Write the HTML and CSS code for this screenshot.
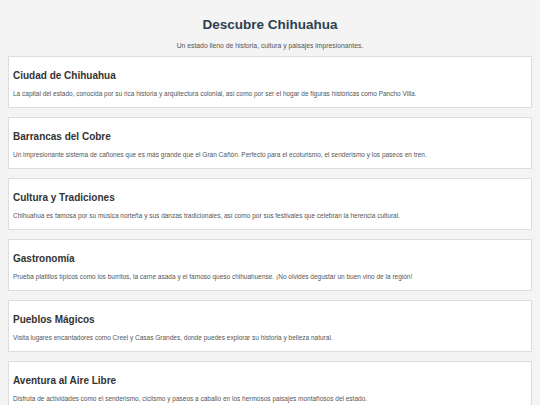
FILE: index.html
```html
<!DOCTYPE html>
<html lang="es">
<head>
<meta charset="utf-8">
<title>Descubre Chihuahua</title>
<link rel="stylesheet" href="styles.css">
</head>
<body>
<header class="hero">
  <h1 class="hero-title">Descubre Chihuahua</h1>
  <p class="hero-sub">Un estado lleno de historia, cultura y paisajes impresionantes.</p>
</header>
<main class="list">
  <section class="card">
    <h2 class="card-title">Ciudad de Chihuahua</h2>
    <p class="card-text">La capital del estado, conocida por su rica historia y arquitectura colonial, así como por ser el hogar de figuras históricas como Pancho Villa.</p>
  </section>
  <section class="card">
    <h2 class="card-title">Barrancas del Cobre</h2>
    <p class="card-text">Un impresionante sistema de cañones que es más grande que el Gran Cañón. Perfecto para el ecoturismo, el senderismo y los paseos en tren.</p>
  </section>
  <section class="card">
    <h2 class="card-title">Cultura y Tradiciones</h2>
    <p class="card-text">Chihuahua es famosa por su música norteña y sus danzas tradicionales, así como por sus festivales que celebran la herencia cultural.</p>
  </section>
  <section class="card">
    <h2 class="card-title">Gastronomía</h2>
    <p class="card-text">Prueba platillos típicos como los burritos, la carne asada y el famoso queso chihuahuense. ¡No olvides degustar un buen vino de la región!</p>
  </section>
  <section class="card">
    <h2 class="card-title">Pueblos Mágicos</h2>
    <p class="card-text">Visita lugares encantadores como Creel y Casas Grandes, donde puedes explorar su historia y belleza natural.</p>
  </section>
  <section class="card">
    <h2 class="card-title">Aventura al Aire Libre</h2>
    <p class="card-text">Disfruta de actividades como el senderismo, ciclismo y paseos a caballo en los hermosos paisajes montañosos del estado.</p>
  </section>
</main>
</body>
</html>
```
FILE: styles.css
```css
* { box-sizing: border-box; }
html, body {
  margin: 0;
  padding: 0;
  background: #f4f4f4;
  font-family: "Liberation Sans", Arial, sans-serif;
  color: #333;
}
.hero {
  padding-top: 17px;
  text-align: center;
}
.hero-title {
  margin: 0;
  font-size: 13.5px;
  line-height: 16px;
  font-weight: bold;
  color: #2c3e50;
}
.hero-sub {
  margin: 7.5px 0 0;
  font-size: 6.8px;
  line-height: 9px;
  color: #555;
}
.list {
  padding: 6.5px 8px 0;
  display: flex;
  flex-direction: column;
  gap: 9px;
}
.card {
  background: #fff;
  border: 1px solid #ddd;
  padding: 13px 4px 9px;
  height: 52px;
}
.card-title {
  margin: 0;
  font-size: 10px;
  line-height: 12px;
  font-weight: bold;
  color: #333;
}
.card-text {
  margin: 7px 0 0;
  font-size: 6.5px;
  line-height: 9px;
  color: #555;
}
```
